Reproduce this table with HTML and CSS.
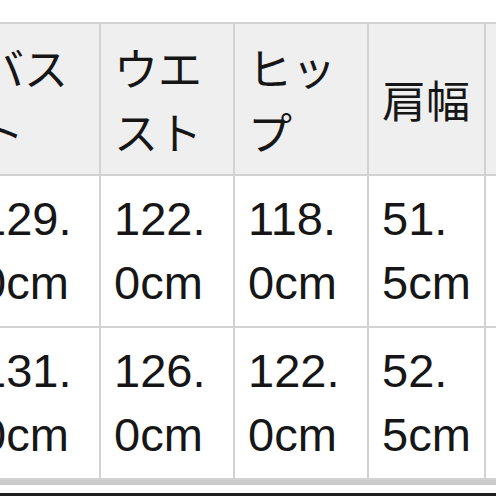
FILE: index.html
```html
<!DOCTYPE html>
<html lang="ja">
<head>
<meta charset="utf-8">
<link rel="stylesheet" href="styles.css">
</head>
<body>
<div class="sheet">
  <table class="size-table">
    <colgroup>
      <col class="c-wide">
      <col class="c-wide">
      <col class="c-wide">
      <col class="c-narrow">
      <col class="c-wide">
    </colgroup>
    <thead>
      <tr>
        <th>バスト</th>
        <th>ウエスト</th>
        <th>ヒップ</th>
        <th class="narrow">肩幅</th>
        <th>着丈</th>
      </tr>
    </thead>
    <tbody>
      <tr>
        <td>129.0cm</td>
        <td>122.0cm</td>
        <td>118.0cm</td>
        <td class="narrow">51.5cm</td>
        <td>70.0cm</td>
      </tr>
      <tr>
        <td>131.0cm</td>
        <td>126.0cm</td>
        <td>122.0cm</td>
        <td class="narrow">52.5cm</td>
        <td>72.0cm</td>
      </tr>
    </tbody>
  </table>
  <div class="scroll-track"></div>
</div>
<div class="divider"></div>
</body>
</html>
```
FILE: styles.css
```css
html, body {
  margin: 0;
  padding: 0;
  background: #ffffff;
}
body {
  width: 496px;
  height: 496px;
  overflow: hidden;
  font-family: "Noto Sans CJK JP", sans-serif;
  color: #161616;
  display: flex;
  flex-direction: column;
}
.sheet {
  margin: 22px 0 0 -35px;
  width: 700px;
}
.size-table {
  border-collapse: collapse;
  table-layout: fixed;
  width: 653px;
}
.c-wide { width: 134px; }
.c-narrow { width: 117px; }
.size-table th,
.size-table td {
  border: 2px solid #d2d2d2;
  padding: 11px 13px;
  line-height: 64px;
  text-align: left;
  vertical-align: middle;
  word-break: break-all;
  overflow-wrap: anywhere;
}
.size-table .narrow {
  padding-right: 12px;
}
.size-table th {
  background: #efefef;
  font-weight: 400;
  font-size: 44px;
}
.size-table td {
  background: #ffffff;
  font-family: "Liberation Sans", "Noto Sans CJK JP", sans-serif;
  font-size: 47px;
}
.scroll-track {
  height: 5px;
  background: #cbcbcb;
  width: 700px;
}
.divider {
  margin-top: auto;
  height: 3px;
  background: #1e1e1e;
}
```
